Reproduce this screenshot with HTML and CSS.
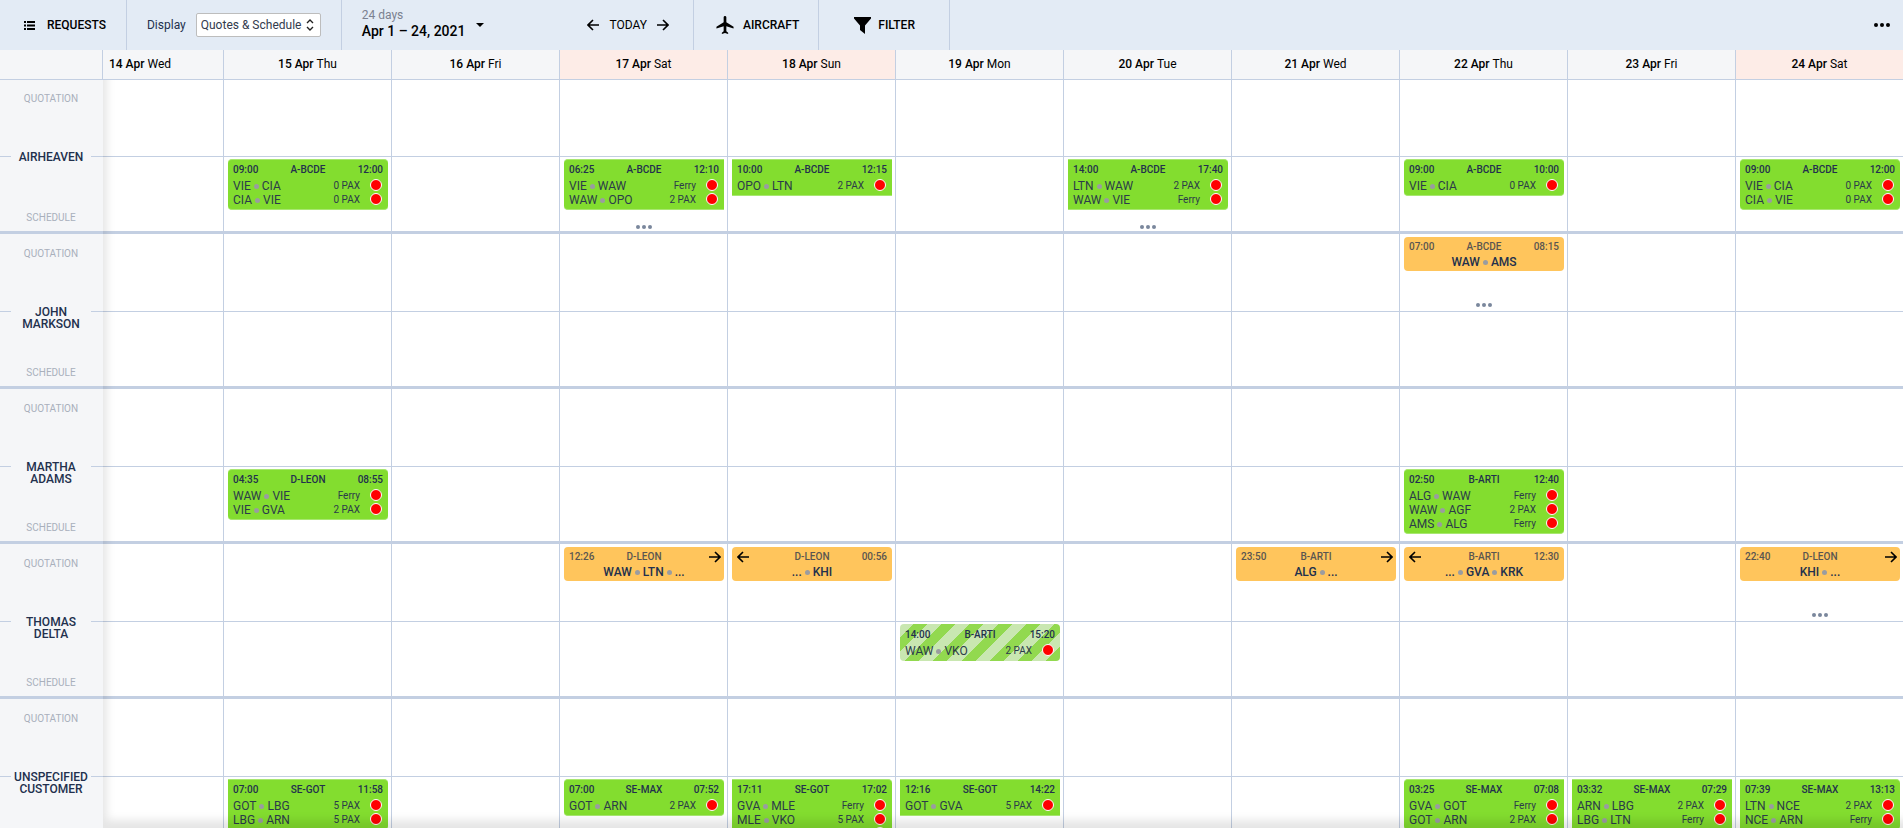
FILE: index.html
```html
<!DOCTYPE html>
<html lang="en">
<head>
<meta charset="utf-8">
<title>Requests schedule</title>
<link rel="stylesheet" href="styles.css">
</head>
<body>
<svg class="sprite" aria-hidden="true">
  <symbol id="left" viewBox="0 0 12 12"><path d="M12 6H1.2M6 1 1 6l5 5" fill="none" stroke="currentColor" stroke-width="1.6"/></symbol>
  <symbol id="right" viewBox="0 0 12 12"><path d="M0 6h10.8M6 1l5 5-5 5" fill="none" stroke="currentColor" stroke-width="1.6"/></symbol>
  <symbol id="dots" viewBox="0 0 16 4"><circle cx="2" cy="2" r="2"/><circle cx="8" cy="2" r="2"/><circle cx="14" cy="2" r="2"/></symbol>
</svg>
<header class="toolbar">
  <button class="tool requests"><svg width="11" height="9" viewBox="0 0 11 9"><path d="M0 0h2v2H0zM3 0h8v2H3zM0 3.5h2v2H0zM3 3.5h8v2H3zM0 7h2v2H0zM3 7h8v2H3z"/></svg>REQUESTS</button>
  <div class="display">
    <label for="display">Display</label>
    <span class="select">
      <select id="display"><option>Quotes &amp; Schedule</option></select>
      <svg width="8" height="12" viewBox="0 0 8 12"><path d="M1 4l3-3 3 3M1 8l3 3 3-3" fill="none" stroke="#222" stroke-width="1.4"/></svg>
    </span>
  </div>
  <button class="range"><span><small>24 days</small><b>Apr 1 – 24, 2021</b></span><svg width="8" height="4" viewBox="0 0 8 4"><path d="M0 0h8L4 4z"/></svg></button>
  <nav class="today">
    <button aria-label="Previous"><svg width="12" height="12"><use href="#left"/></svg></button>
    <button>TODAY</button>
    <button aria-label="Next"><svg width="12" height="12"><use href="#right"/></svg></button>
  </nav>
  <button class="tool aircraft"><svg width="18" height="18" viewBox="2.5 2 19 20"><path d="M21.5 16v-2l-8-5V3.5C13.500 2.670 12.830 2 12 2s-1.500.670-1.500 1.500V9l-8 5v2l8-2.500V19l-2 1.500V22l3.500-1 3.500 1v-1.500L13.500 19v-5.500l8 2.500z"/></svg>AIRCRAFT</button>
  <button class="tool filter"><svg width="17" height="17" viewBox="0 0 17 17"><path d="M0 0h17v1.500L11 8.500V17L6 13V8.500L0 1.500z"/></svg>FILTER</button>
  <button class="more" aria-label="More"><svg width="16" height="4"><use href="#dots"/></svg></button>
</header>
<main class="board">
<table class="plan">
<colgroup><col class="c-name"><col class="c-first"><col span="10"></colgroup>
<thead><tr>
<td></td><th class="start">14 Apr <span>Wed</span></th><th>15 Apr <span>Thu</span></th><th>16 Apr <span>Fri</span></th><th class="weekend">17 Apr <span>Sat</span></th><th class="weekend">18 Apr <span>Sun</span></th><th>19 Apr <span>Mon</span></th><th>20 Apr <span>Tue</span></th><th>21 Apr <span>Wed</span></th><th>22 Apr <span>Thu</span></th><th>23 Apr <span>Fri</span></th><th class="weekend">24 Apr <span>Sat</span></th>
</tr></thead>
<tbody>
<tr class="quotes">
<th rowspan="2"><div class="who"><small>QUOTATION</small><b>AIRHEAVEN</b><small>SCHEDULE</small></div></th>
<td></td><td></td><td></td><td></td><td></td><td></td><td></td><td></td><td></td><td></td><td></td>
</tr>
<tr class="flights">
<td></td>
<td><div class="card"><div class="head"><span>09:00</span><b>A-BCDE</b><span>12:00</span></div><div class="leg"><span>VIE</span><i></i><span>CIA</span><em>0 PAX</em><u></u></div><div class="leg"><span>CIA</span><i></i><span>VIE</span><em>0 PAX</em><u></u></div></div></td>
<td></td>
<td><div class="cell"><div class="card cut-right"><div class="head"><span>06:25</span><b>A-BCDE</b><span>12:10</span></div><div class="leg"><span>VIE</span><i></i><span>WAW</span><em>Ferry</em><u></u></div><div class="leg"><span>WAW</span><i></i><span>OPO</span><em>2 PAX</em><u></u></div></div><button class="rest" aria-label="Show more"><svg width="16" height="4"><use href="#dots"/></svg></button></div></td>
<td><div class="card cut-left cut-right"><div class="head"><span>10:00</span><b>A-BCDE</b><span>12:15</span></div><div class="leg"><span>OPO</span><i></i><span>LTN</span><em>2 PAX</em><u></u></div></div></td>
<td></td>
<td><div class="cell"><div class="card cut-left"><div class="head"><span>14:00</span><b>A-BCDE</b><span>17:40</span></div><div class="leg"><span>LTN</span><i></i><span>WAW</span><em>2 PAX</em><u></u></div><div class="leg"><span>WAW</span><i></i><span>VIE</span><em>Ferry</em><u></u></div></div><button class="rest" aria-label="Show more"><svg width="16" height="4"><use href="#dots"/></svg></button></div></td>
<td></td>
<td><div class="card"><div class="head"><span>09:00</span><b>A-BCDE</b><span>10:00</span></div><div class="leg"><span>VIE</span><i></i><span>CIA</span><em>0 PAX</em><u></u></div></div></td>
<td></td>
<td><div class="card"><div class="head"><span>09:00</span><b>A-BCDE</b><span>12:00</span></div><div class="leg"><span>VIE</span><i></i><span>CIA</span><em>0 PAX</em><u></u></div><div class="leg"><span>CIA</span><i></i><span>VIE</span><em>0 PAX</em><u></u></div></div></td>
</tr>
</tbody>
<tbody>
<tr class="quotes">
<th rowspan="2"><div class="who"><small>QUOTATION</small><b>JOHN MARKSON</b><small>SCHEDULE</small></div></th>
<td></td><td></td><td></td><td></td><td></td><td></td><td></td><td></td>
<td><div class="cell"><div class="card quote"><div class="head"><span>07:00</span><b>A-BCDE</b><span>08:15</span></div><div class="route">WAW<i></i>AMS</div></div><button class="rest" aria-label="Show more"><svg width="16" height="4"><use href="#dots"/></svg></button></div></td>
<td></td><td></td>
</tr>
<tr class="flights"><td></td><td></td><td></td><td></td><td></td><td></td><td></td><td></td><td></td><td></td><td></td></tr>
</tbody>
<tbody>
<tr class="quotes">
<th rowspan="2"><div class="who"><small>QUOTATION</small><b>MARTHA ADAMS</b><small>SCHEDULE</small></div></th>
<td></td><td></td><td></td><td></td><td></td><td></td><td></td><td></td><td></td><td></td><td></td>
</tr>
<tr class="flights">
<td></td>
<td><div class="card"><div class="head"><span>04:35</span><b>D-LEON</b><span>08:55</span></div><div class="leg"><span>WAW</span><i></i><span>VIE</span><em>Ferry</em><u></u></div><div class="leg"><span>VIE</span><i></i><span>GVA</span><em>2 PAX</em><u></u></div></div></td>
<td></td><td></td><td></td><td></td><td></td><td></td>
<td><div class="card"><div class="head"><span>02:50</span><b>B-ARTI</b><span>12:40</span></div><div class="leg"><span>ALG</span><i></i><span>WAW</span><em>Ferry</em><u></u></div><div class="leg"><span>WAW</span><i></i><span>AGF</span><em>2 PAX</em><u></u></div><div class="leg"><span>AMS</span><i></i><span>ALG</span><em>Ferry</em><u></u></div></div></td>
<td></td><td></td>
</tr>
</tbody>
<tbody>
<tr class="quotes">
<th rowspan="2"><div class="who"><small>QUOTATION</small><b>THOMAS DELTA</b><small>SCHEDULE</small></div></th>
<td></td><td></td><td></td>
<td><div class="card quote"><div class="head"><span>12:26</span><b>D-LEON</b><svg class="next" width="12" height="12"><use href="#right"/></svg></div><div class="route">WAW<i></i>LTN<i></i>...</div></div></td>
<td><div class="card quote"><div class="head"><svg width="12" height="12"><use href="#left"/></svg><b>D-LEON</b><span>00:56</span></div><div class="route">...<i></i>KHI</div></div></td>
<td></td><td></td>
<td><div class="card quote"><div class="head"><span>23:50</span><b>B-ARTI</b><svg class="next" width="12" height="12"><use href="#right"/></svg></div><div class="route">ALG<i></i>...</div></div></td>
<td><div class="card quote"><div class="head"><svg width="12" height="12"><use href="#left"/></svg><b>B-ARTI</b><span>12:30</span></div><div class="route">...<i></i>GVA<i></i>KRK</div></div></td>
<td></td>
<td><div class="cell"><div class="card quote"><div class="head"><span>22:40</span><b>D-LEON</b><svg class="next" width="12" height="12"><use href="#right"/></svg></div><div class="route">KHI<i></i>...</div></div><button class="rest" aria-label="Show more"><svg width="16" height="4"><use href="#dots"/></svg></button></div></td>
</tr>
<tr class="flights">
<td></td><td></td><td></td><td></td><td></td>
<td><div class="card option"><div class="head"><span>14:00</span><b>B-ARTI</b><span>15:20</span></div><div class="leg"><span>WAW</span><i></i><span>VKO</span><em>2 PAX</em><u></u></div></div></td>
<td></td><td></td><td></td><td></td><td></td>
</tr>
</tbody>
<tbody>
<tr class="quotes">
<th rowspan="2"><div class="who"><small>QUOTATION</small><b>UNSPECIFIED CUSTOMER</b></div></th>
<td></td><td></td><td></td><td></td><td></td><td></td><td></td><td></td><td></td><td></td><td></td>
</tr>
<tr class="flights">
<td></td>
<td><div class="card cut-left"><div class="head"><span>07:00</span><b>SE-GOT</b><span>11:58</span></div><div class="leg"><span>GOT</span><i></i><span>LBG</span><em>5 PAX</em><u></u></div><div class="leg"><span>LBG</span><i></i><span>ARN</span><em>5 PAX</em><u></u></div></div></td>
<td></td>
<td><div class="card"><div class="head"><span>07:00</span><b>SE-MAX</b><span>07:52</span></div><div class="leg"><span>GOT</span><i></i><span>ARN</span><em>2 PAX</em><u></u></div></div></td>
<td><div class="card cut-left"><div class="head"><span>17:11</span><b>SE-GOT</b><span>17:02</span></div><div class="leg"><span>GVA</span><i></i><span>MLE</span><em>Ferry</em><u></u></div><div class="leg"><span>MLE</span><i></i><span>VKO</span><em>5 PAX</em><u></u></div><div class="leg"><em></em><u></u></div></div></td>
<td><div class="card cut-left cut-right"><div class="head"><span>12:16</span><b>SE-GOT</b><span>14:22</span></div><div class="leg"><span>GOT</span><i></i><span>GVA</span><em>5 PAX</em><u></u></div></div></td>
<td></td><td></td>
<td><div class="card cut-right"><div class="head"><span>03:25</span><b>SE-MAX</b><span>07:08</span></div><div class="leg"><span>GVA</span><i></i><span>GOT</span><em>Ferry</em><u></u></div><div class="leg"><span>GOT</span><i></i><span>ARN</span><em>2 PAX</em><u></u></div></div></td>
<td><div class="card cut-left cut-right"><div class="head"><span>03:32</span><b>SE-MAX</b><span>07:29</span></div><div class="leg"><span>ARN</span><i></i><span>LBG</span><em>2 PAX</em><u></u></div><div class="leg"><span>LBG</span><i></i><span>LTN</span><em>Ferry</em><u></u></div></div></td>
<td><div class="card cut-left"><div class="head"><span>07:39</span><b>SE-MAX</b><span>13:13</span></div><div class="leg"><span>LTN</span><i></i><span>NCE</span><em>2 PAX</em><u></u></div><div class="leg"><span>NCE</span><i></i><span>ARN</span><em>Ferry</em><u></u></div></div></td>
</tr>
</tbody>
</table>
<div class="shade"></div>
</main>
</body>
</html>
```
FILE: styles.css
```css
* { box-sizing: border-box; }
body {
  margin: 0;
  height: 100vh;
  display: flex;
  flex-direction: column;
  overflow: hidden;
  font: 400 12px/14px Roboto, "Liberation Sans", sans-serif;
  color: #000;
  background: #fff;
}
button { margin: 0; padding: 0; border: 0; background: none; font: inherit; color: inherit; cursor: pointer; }
svg { display: block; flex: none; }
.sprite { position: absolute; width: 0; height: 0; }

/* Toolbar */
.toolbar { display: flex; flex: none; height: 50px; background: #e3ebf5; }
.toolbar > * { display: flex; align-items: center; }
.tool { border-right: 1px solid #c3cfe2; font-weight: 500; }
.requests { gap: 12px; padding: 0 20px 0 24px; }
.display { gap: 10px; padding: 0 20px; border-right: 1px solid #c3cfe2; color: #22304d; }
.select { position: relative; }
.select select {
  display: block;
  appearance: none;
  width: 125px;
  height: 24px;
  padding: 0 4px;
  border: 1px solid #bdbdbd;
  border-radius: 2px;
  background: #fff;
  font: inherit;
  color: #333b4d;
}
.select svg { position: absolute; right: 7px; top: 6px; pointer-events: none; }
.range { gap: 11px; padding: 0 20px; text-align: left; }
.range span { padding-bottom: 4px; }
.range small, .range b { display: block; font-size: 12px; line-height: 15px; font-weight: 400; color: #7b8190; }
.range b { font-size: 14px; line-height: 16px; font-weight: 500; color: #000; }
.today { gap: 10px; padding: 0 24px 0 83px; border-right: 1px solid #c3cfe2; }
.aircraft { gap: 9px; padding: 0 19px 0 22px; }
.filter { gap: 7px; padding: 0 34px 0 35px; }
.more { margin-left: auto; padding: 0 13px; }

/* Schedule table */
.board { position: relative; flex: 1; min-height: 0; overflow: hidden; }
.plan { width: calc(100% + 1px); table-layout: fixed; border-collapse: separate; border-spacing: 0; }
.c-name { width: 103px; }
.c-first { width: 121px; }
.plan td, .plan th { padding: 0; border-right: 1px solid #c3cfe2; vertical-align: top; }
.plan thead td, .plan thead th { height: 29px; padding-bottom: 2px; vertical-align: middle; background: #f5f6f8; font-weight: 500; }
.plan thead span { font-weight: 400; }
.plan thead .weekend { background: #fdece7; }
.plan thead .start { padding-left: 6px; text-align: left; }
.plan tbody th { border-right: 0; border-bottom: 3px solid #c3cfe2; background: #f5f6f8; }
.plan tbody:nth-of-type(1) .quotes > * { box-shadow: inset 0 1px #c3cfe2; }
.quotes td { height: 78px; border-bottom: 1px solid #c3cfe2; }
.flights td { height: 77px; border-bottom: 3px solid #c3cfe2; }
.who {
  display: flex;
  flex-direction: column;
  align-items: center;
  min-height: 152px;
  padding: 14px 1px 7px 0;
  line-height: 12px;
  background: linear-gradient(#c3cfe2, #c3cfe2) 0 77px / 100% 1px no-repeat;
}
.who small { font-size: 10px; font-weight: 400; color: #a9b0bc; }
.who b { width: 80px; margin: 46px 0 auto; font-weight: 500; color: #22304d; background: #f5f6f8; }

/* Cards */
.cell { display: flex; flex-direction: column; height: 74px; }
.quotes .cell { height: 77px; }
.card {
  margin: 2px 3px 0 4px;
  padding: 4px 5px 2px;
  border: 0 solid #a8e770;
  border-width: 1px 0;
  border-radius: 4px;
  background: #83dd2f;
  color: #22304d;
}
.cut-left { border-top-left-radius: 0; border-bottom-left-radius: 0; }
.cut-right { border-top-right-radius: 0; border-bottom-right-radius: 0; }
.head { display: grid; grid-template-columns: 1fr auto 1fr; align-items: center; height: 12px; margin-bottom: 3px; font-size: 10px; line-height: 12px; font-weight: 500; }
.head b { font-weight: 500; }
.head > :last-child { justify-self: end; }
.leg { display: flex; align-items: center; height: 14px; color: #2b3b4a; }
.leg em { margin-left: auto; font-size: 10px; font-style: normal; }
.leg u { width: 12px; height: 12px; margin: 0 1px 2px 10px; border: 1px solid #fff; border-radius: 50%; background: #f00; }
.card i { display: inline-block; width: 5px; height: 5px; margin: 0 3px; border-radius: 50%; background: #9a9ca0; }
.quote { margin-top: 3px; padding: 4px 5px 2px; border-width: 0; background: #ffc55c; }
.quote .head { margin-bottom: 2px; }
.quote .head span, .quote .head b { opacity: .75; }
.quote .head svg { color: #000; }
.quote .next { margin-right: -2px; }
.route { display: flex; align-items: center; justify-content: center; font-weight: 500; }
.option { border-width: 0; padding: 5px 5px 3px; background: repeating-linear-gradient(-45deg, #92d94f 0 10px, #c9e7b1 10px 20px); }
.rest { margin: auto auto 2px; color: #7a879c; fill: currentColor; }
.quotes .rest { margin-bottom: 4px; }

.shade { position: absolute; inset: 30px 0 0 103px; pointer-events: none; box-shadow: inset 6px -10px 8px -2px rgba(0, 0, 0, .1); }
```
